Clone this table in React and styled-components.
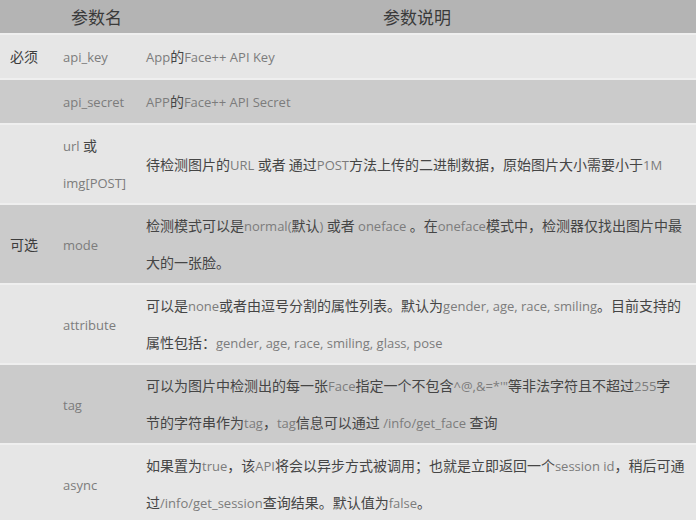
import React from 'react';
import styled, { createGlobalStyle } from 'styled-components';

const GlobalStyle = createGlobalStyle`
  html, body {
    margin: 0;
    padding: 0;
    background: #e6e6e6;
  }
  body {
    font-family: "Noto Sans CJK SC", sans-serif;
  }
`;

const params = [
  { group: '必须', name: ['api_key'], desc: ['App的Face++ API Key'] },
  { group: '', name: ['api_secret'], desc: ['APP的Face++ API Secret'] },
  { group: '', name: ['url 或', 'img[POST]'], desc: ['待检测图片的URL 或者 通过POST方法上传的二进制数据，原始图片大小需要小于1M'] },
  {
    group: '可选',
    name: ['mode'],
    desc: ['检测模式可以是normal(默认) 或者 oneface 。在oneface模式中，检测器仅找出图片中最', '大的一张脸。'],
  },
  {
    group: '',
    name: ['attribute'],
    desc: ['可以是none或者由逗号分割的属性列表。默认为gender, age, race, smiling。目前支持的', '属性包括：gender, age, race, smiling, glass, pose'],
  },
  {
    group: '',
    name: ['tag'],
    desc: ['可以为图片中检测出的每一张Face指定一个不包含^@,&=*\'"等非法字符且不超过255字', '节的字符串作为tag，tag信息可以通过 /info/get_face 查询'],
  },
  {
    group: '',
    name: ['async'],
    desc: ['如果置为true，该API将会以异步方式被调用；也就是立即返回一个session id，稍后可通', '过/info/get_session查询结果。默认值为false。'],
  },
];

// split a line into CJK and latin runs, latin is drawn lighter
function mix(text) {
  return text.split(/([\x20-\x7E]+)/).map((part, i) =>
    /[\x20-\x7E]/.test(part) && part.trim() ? <Latin key={i}>{part}</Latin> : part
  );
}

export default function App() {
  return (
    <>
      <GlobalStyle />
      <Table>
        <colgroup>
          <col style={{ width: 55 }} />
          <col style={{ width: 83 }} />
          <col />
        </colgroup>
        <thead>
          <tr>
            <Head />
            <Head>参数名</Head>
            <Head>参数说明</Head>
          </tr>
        </thead>
        <tbody>
          {params.map(p => (
            <Row key={p.name[0]} $dark={['api_secret', 'mode', 'tag'].includes(p.name[0])}>
              <Group>{p.group}</Group>
              <Name>
                {p.name.map((line, i) => (
                  <Line key={i}>{mix(line)}</Line>
                ))}
              </Name>
              <Desc>
                {p.desc.map((line, i) => (
                  <Line key={i}>{mix(line)}</Line>
                ))}
              </Desc>
            </Row>
          ))}
        </tbody>
      </Table>
    </>
  );
}

const Table = styled('table')`
  width: 696px;
  border-collapse: collapse;
  table-layout: fixed;
`;

const Head = styled('th')`
  height: 33px;
  padding: 0;
  background: #b4b4b4;
  color: #3a3a3a;
  font-size: 17px;
  font-weight: 400;
  text-align: center;
  vertical-align: middle;
`;

const Row = styled('tr')`
  background: ${props => (props.$dark ? '#cbcbcb' : '#e6e6e6')};

  td {
    height: 39px;
    border-top: 2px solid #efefef;
    padding: 2px 8px;
    vertical-align: middle;
    font-size: 14px;
    line-height: 37px;
  }
`;

const Group = styled('td')`
  && {
    padding-left: 10px;
    padding-right: 0;
  }
  color: #3c3c3c;
`;

const Name = styled('td')`
  color: #454545;
`;

const Desc = styled('td')`
  color: #454545;
`;

const Line = styled('div')`
  height: 37px;
  white-space: nowrap;
`;

const Latin = styled('span')`
  font-family: "Open Sans", sans-serif;
  font-size: 13px;
  line-height: 1;
  color: #7c7c7c;
`;
